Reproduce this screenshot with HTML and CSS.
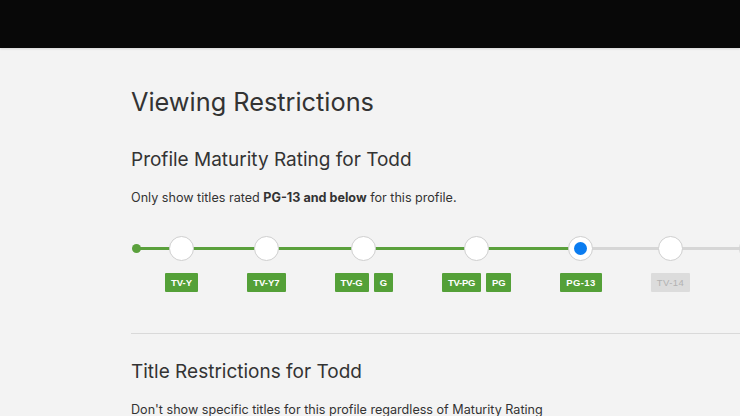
FILE: index.html
```html
<!DOCTYPE html>
<html lang="en">
<head>
<meta charset="utf-8">
<title>Viewing Restrictions</title>
<link rel="stylesheet" href="styles.css">
</head>
<body>
<header class="topbar"></header>
<main class="content">
  <h1 class="page-title">Viewing Restrictions</h1>
  <section class="section section-rating">
    <h2 class="section-title">Profile Maturity Rating for Todd</h2>
    <p class="section-text">Only show titles rated <strong>PG-13 and below</strong> for this profile.</p>
    <div class="slider">
      <div class="track"><div class="track-fill" style="width:444px"></div></div>
      <span class="start-dot"></span>
      <div class="stops">
        <div class="stop"><span class="knob"></span><div class="labels"><span class="tag">TV-Y</span></div></div>
        <div class="stop"><span class="knob"></span><div class="labels"><span class="tag">TV-Y7</span></div></div>
        <div class="stop"><span class="knob"></span><div class="labels"><span class="tag">TV-G</span><span class="tag">G</span></div></div>
        <div class="stop"><span class="knob"></span><div class="labels"><span class="tag tag-tight">TV-PG</span><span class="tag tag-tight">PG</span></div></div>
        <div class="stop"><span class="knob knob-active"></span><div class="labels"><span class="tag tag-wide">PG-13</span></div></div>
        <div class="stop"><span class="knob"></span><div class="labels"><span class="tag tag-off">TV-14</span></div></div>
        <div class="stop"><span class="knob"></span><div class="labels"><span class="tag tag-off">R</span></div></div>
      </div>
    </div>
  </section>
  <hr class="divider">
  <section class="section section-titles">
    <h2 class="section-title">Title Restrictions for Todd</h2>
    <p class="section-text">Don't show specific titles for this profile regardless of Maturity Rating</p>
  </section>
</main>
</body>
</html>
```

FILE: styles.css
```css
* { box-sizing: border-box; }
html, body { margin: 0; padding: 0; }
body {
  background: #f3f3f3;
  font-family: Inter, "Noto Sans", sans-serif;
  color: #333;
  overflow: hidden;
  width: 740px;
  height: 416px;
}
.topbar {
  height: 48px;
  background: #080808;
  box-shadow: 0 1px 2px rgba(0,0,0,0.12);
}
.content {
  padding: 38px 0 0 131px;
}
.page-title {
  margin: 0;
  font-size: 25.3px;
  font-weight: 400;
  line-height: 32px;
  color: #333;
}
.section { display: flex; flex-direction: column; }
.section-rating { margin-top: 30px; }
.section-titles { margin-top: 26px; }
.section-title {
  margin: 0;
  font-size: 19px;
  font-weight: 400;
  line-height: 24px;
  color: #333;
}
.section-text {
  margin: 18px 0 0;
  font-size: 12.6px;
  line-height: 16px;
  color: #333;
}
.section-text strong { font-weight: 700; }
.slider {
  position: relative;
  margin-top: 30px;
  height: 60px;
  width: 700px;
}
.track {
  position: absolute;
  left: 5px;
  right: 0;
  top: 11px;
  height: 3px;
  background: #d6d6d6;
}
.track-fill {
  height: 100%;
  background: #5aa03c;
}
.start-dot {
  position: absolute;
  left: 1px;
  top: 8px;
  width: 9px;
  height: 9px;
  border-radius: 50%;
  background: #5aa03c;
}
.stops {
  position: relative;
  display: flex;
  gap: 49px;
  padding-left: 34px;
}
.stop {
  display: flex;
  flex-direction: column;
  align-items: center;
  gap: 12px;
}
.knob {
  width: 25px;
  height: 25px;
  border-radius: 50%;
  background: #fff;
  border: 1px solid #cfcfcf;
  display: flex;
  align-items: center;
  justify-content: center;
}
.knob-active::after {
  content: "";
  width: 13px;
  height: 13px;
  border-radius: 50%;
  background: #0a7cf0;
}
.labels {
  display: flex;
  gap: 5px;
}
.tag {
  display: inline-flex;
  align-items: center;
  height: 19px;
  padding: 0 6px;
  background: #54a038;
  color: #fff;
  font-family: "Liberation Sans", Arial, sans-serif;
  font-weight: 700;
  font-size: 9.5px;
  border-radius: 1px;
}
.tag-tight { letter-spacing: -0.3px; }
.tag-wide { letter-spacing: 0.4px; }
.tag-off {
  background: #dcdcdc;
  color: #b2b2b2;
  font-weight: 400;
  letter-spacing: 0.4px;
}
.divider {
  margin: 37px 0 0;
  border: 0;
  border-top: 1px solid #d9d9d9;
}
```
